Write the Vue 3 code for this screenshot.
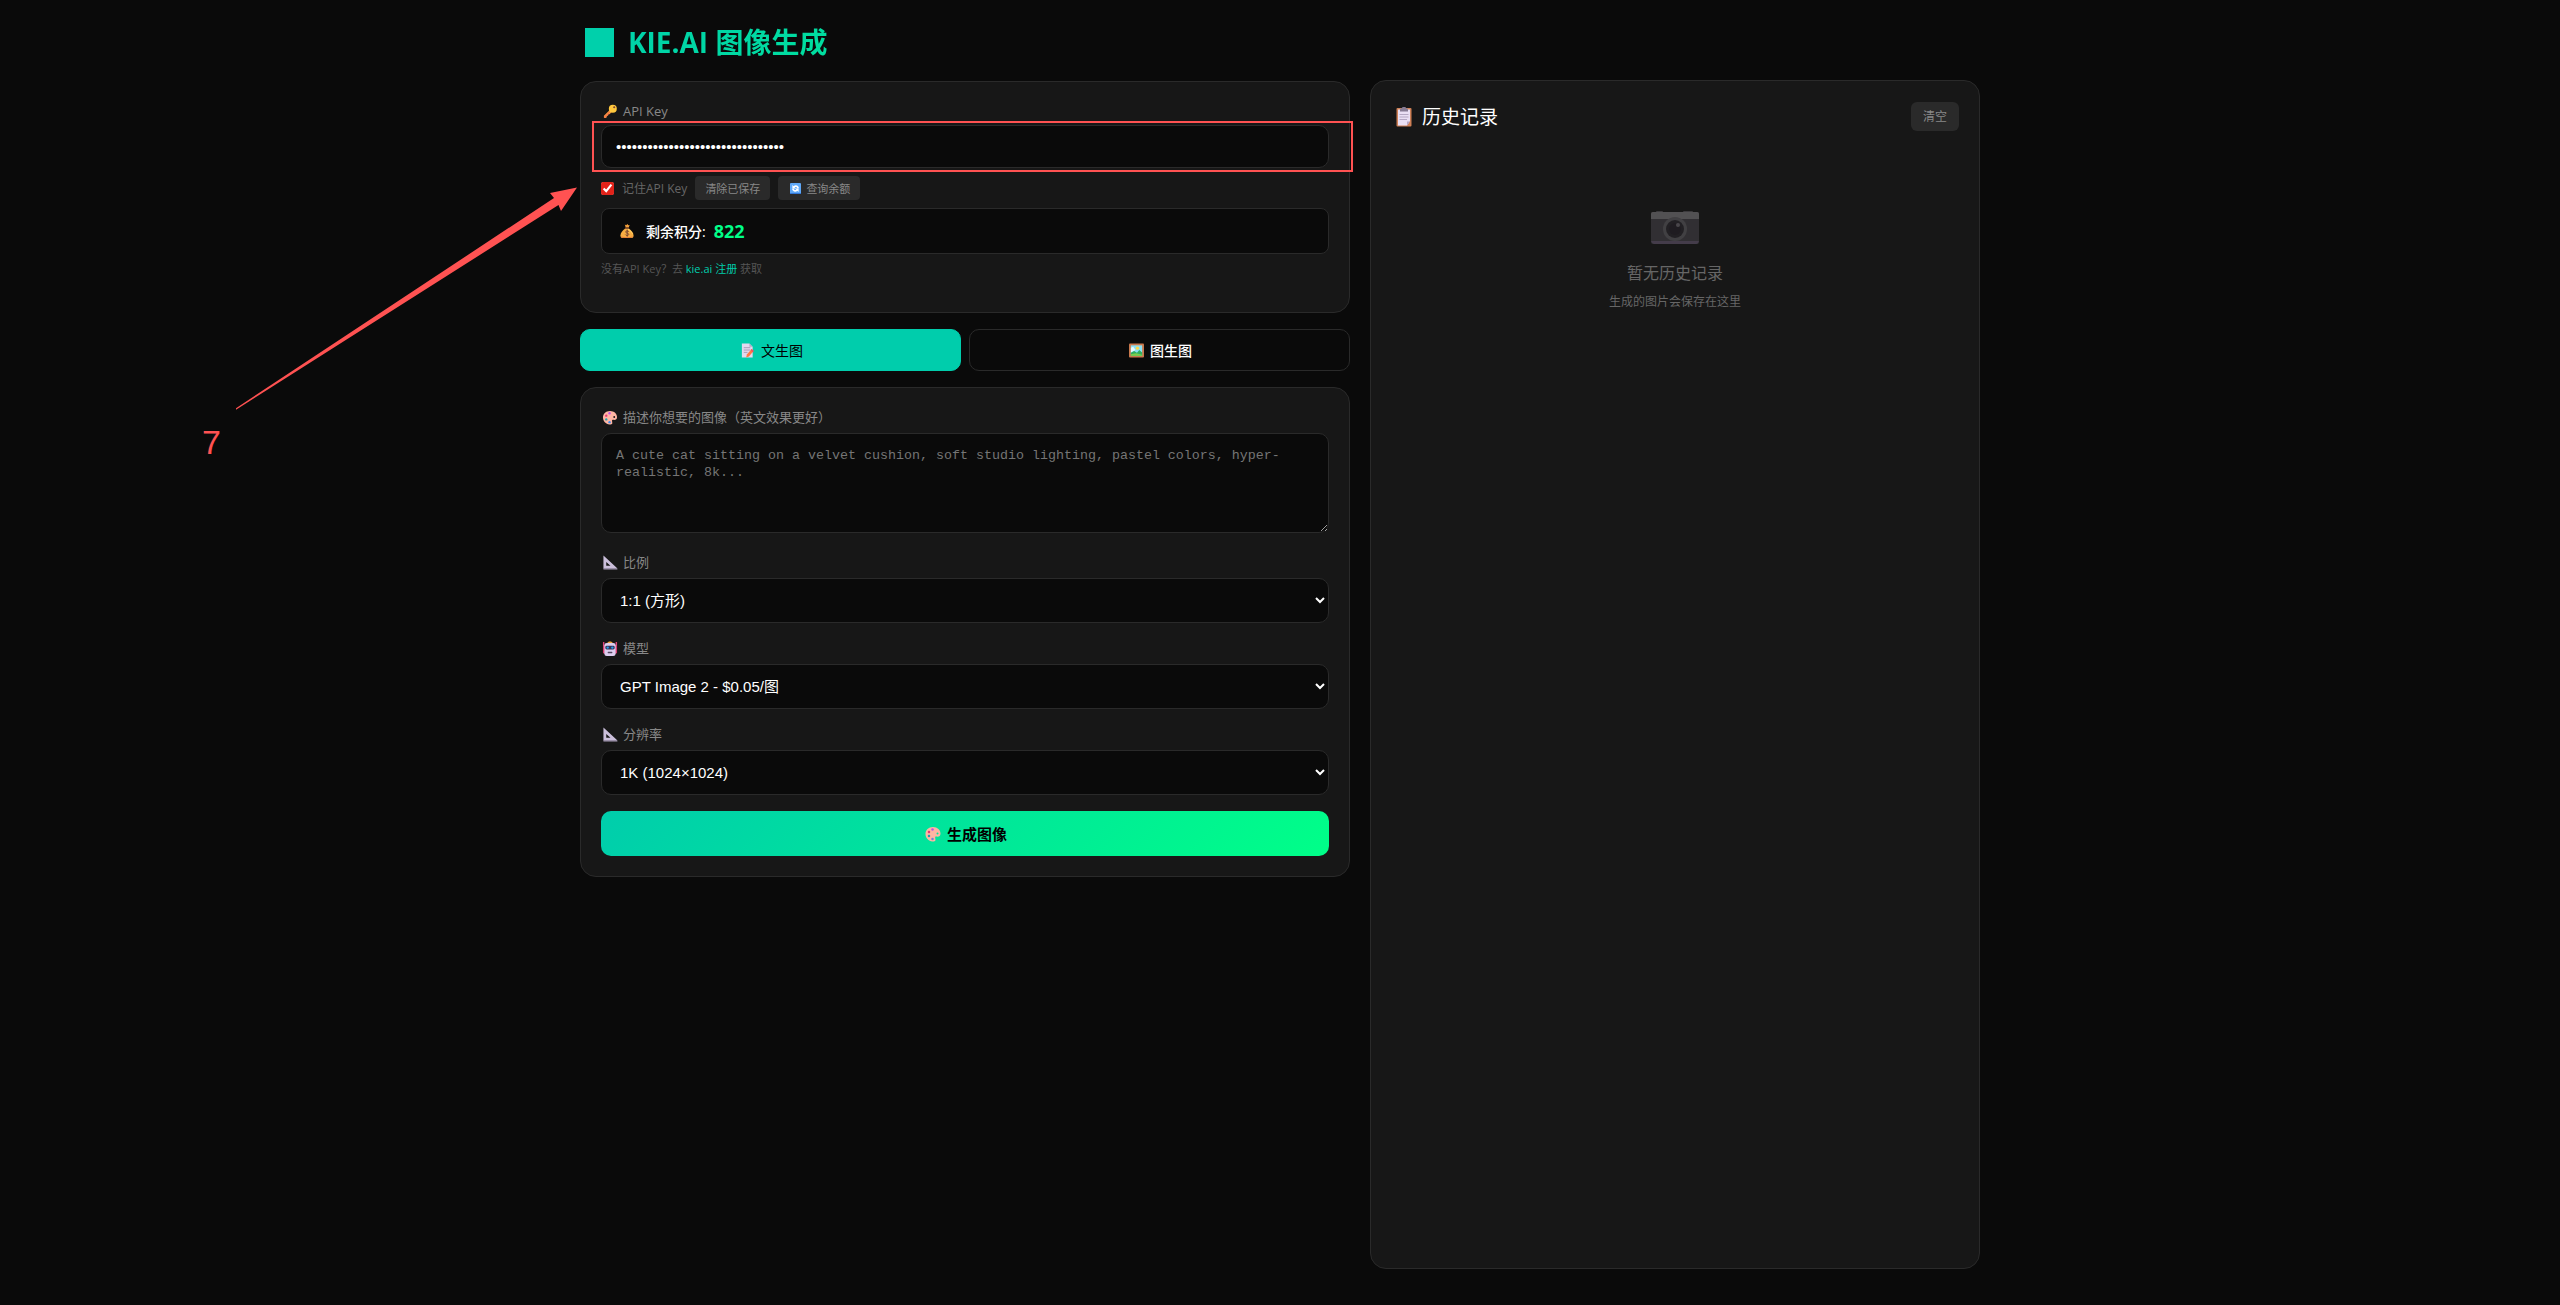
<template>
  <div class="page">
    <div class="container">
      <!-- 步骤标注 -->
      <svg class="arrow" viewBox="0 0 344 224" aria-hidden="true">
        <path d="M0 222.200 L318 12 L314 7 L341 1.500 L325 25 L322.500 19 L0 223.800 Z" fill="#ff5252" />
      </svg>
      <div class="step">7</div>

      <main class="main">
        <h1><span class="logo"></span>KIE.AI 图像生成</h1>

        <section class="card key-card">
          <label class="label label-key" for="apiKey">
            <svg class="icon" viewBox="0 0 32 32">
              <path d="M17 11 L3 25 L3 29 L7 30 L9 28 L9 25 L12 25 L12 22 L15 22 L21 16 Z" fill="#f79a3c" />
              <circle cx="22" cy="10" r="8.500" fill="#ffc83d" />
              <circle cx="25" cy="7" r="2.300" fill="#7d4533" />
              <path d="M3 29 L5 30 L17 18 L15 16 L3 27 Z" fill="#f9774a" />
            </svg>
            API Key
          </label>
          <div class="key-field">
            <input id="apiKey" v-model="apiKey" class="control" type="password" autocomplete="off" />
          </div>
          <div class="key-actions">
            <input id="remember" v-model="remember" type="checkbox" />
            <label for="remember">记住API Key</label>
            <button class="btn-small" type="button" @click="clearKey">清除已保存</button>
            <button class="btn-small" type="button">
              <svg class="icon-small" viewBox="0 0 32 32">
                <rect width="32" height="32" rx="3" fill="#5fa8f7" />
                <rect y="29" width="32" height="3" fill="#3277d8" />
                <path d="M7 6 V16 H17 L13.500 12.500 C17 10 20 12 21 15 H26 C25 7 16 4 10.500 9.500 Z M25 26 V16 H15 L18.500 19.500 C15 22 12 20 11 17 H6 C7 25 16 28 21.500 22.500 Z" fill="#fff" />
              </svg>
              查询余额
            </button>
          </div>
          <div class="balance">
            <svg class="icon-bag" viewBox="0 0 32 32">
              <path d="M11 1 L14 3 L17 0 L19 3 L22 2 L20 8 H13 Z" fill="#f5a13c" />
              <path d="M12 10 H20 C26 14 31 20 31 26 C31 30 29 32 25 32 H7 C3 32 1 30 1 26 C1 20 6 14 12 10 Z" fill="#f8ad43" />
              <path d="M18 10 C25 14 29 19 30 24 C27 22 25 17 18 13 Z" fill="#ffd567" />
              <path d="M3 28 C9 31 23 31 29 28 C28 32 25 32 25 32 H7 C5 32 3 30 3 28 Z" fill="#e17a38" />
              <rect x="11" y="8" width="10" height="3" rx="1" fill="#8b5131" />
              <path d="M20 18 C19 15 13 15 13 18 C13 22 20 20 20 24 C20 27 13 27 12 24 M16.500 13 V29" fill="none" stroke="#7c4932" stroke-width="2.200" />
            </svg>
            <span class="balance-label">剩余积分:</span>
            <strong>{{ credits }}</strong>
          </div>
          <p class="hint">没有API Key？去 <a href="#">kie.ai 注册</a> 获取</p>
        </section>

        <div class="tabs">
          <button type="button" :class="{ active: mode === 'text' }" @click="mode = 'text'">
            <svg class="icon-tab" viewBox="0 0 32 32">
              <path d="M4 1 H20 L27 8 V31 H4 Z" fill="#e3d8ef" />
              <path d="M20 1 V8 H27 Z" fill="#b6aac6" />
              <path d="M8 10 H22 M8 15 H22 M8 20 H16" stroke="#a79bb6" stroke-width="2" />
              <path d="M25 13 L29 17 L19 29 L13 31 L15 24 Z" fill="#ff7944" />
              <path d="M25 13 L29 17 L27 20 L23 15 Z" fill="#ef5068" />
            </svg>
            文生图
          </button>
          <button type="button" :class="{ active: mode === 'image' }" @click="mode = 'image'">
            <svg class="icon-tab" viewBox="0 0 32 32">
              <rect y="1" width="32" height="30" rx="2" fill="#c9794d" />
              <rect x="4" y="5" width="24" height="22" fill="#8be1f5" />
              <circle cx="18" cy="11" r="3.500" fill="#ffda4a" />
              <path d="M4 10 L9 8 L14 15 L4 20 Z" fill="#e6fbff" />
              <path d="M4 21 L11 17 L17 21 L22 15 L28 20 V27 H4 Z" fill="#2fae62" />
              <path d="M4 24 L15 22 L28 25 V27 H4 Z" fill="#7bcf4c" />
            </svg>
            图生图
          </button>
        </div>

        <section class="card">
          <label class="label" for="prompt">
            <svg class="icon" viewBox="0 0 32 32">
              <path :d="palettePath" fill="#ffb5a3" fill-rule="evenodd" />
              <circle cx="8" cy="12" r="2.500" fill="#e63974" />
              <circle cx="15" cy="7" r="2.500" fill="#bd52e8" />
              <circle cx="8" cy="20" r="2.500" fill="#22a3ad" />
              <circle cx="15" cy="26" r="2.500" fill="#3e8df0" />
            </svg>
            描述你想要的图像（英文效果更好）
          </label>
          <textarea
            id="prompt"
            v-model="prompt"
            placeholder="A cute cat sitting on a velvet cushion, soft studio lighting, pastel colors, hyper-realistic, 8k..."
          ></textarea>

          <div v-for="field in fields" :key="field.id" class="field">
            <label class="label" :for="field.id">
              <svg v-if="field.icon === 'ruler'" class="icon" viewBox="0 0 32 32">
                <path d="M2 1 L32 29 H2 Z M8 15 V23 H17 Z" fill="#cbbfdb" fill-rule="evenodd" />
                <path d="M2 28 H31 L32 31 H2 Z" fill="#aa9dba" />
              </svg>
              <svg v-else class="icon" viewBox="0 0 32 32">
                <path d="M1 2 H4 V12 H1 Z M28 2 H31 V12 H28 Z" fill="#e3447a" />
                <rect x="1" y="10" width="30" height="17" rx="3" fill="#d63d72" />
                <path d="M10 5 C11 0 21 0 22 5 Z" fill="#f2a63b" />
                <rect x="4" y="4" width="24" height="28" rx="5" fill="#dccdee" />
                <rect x="6" y="10" width="20" height="8" rx="3" fill="#343154" />
                <circle cx="11" cy="14" r="2.500" fill="#259de8" />
                <circle cx="21" cy="14" r="2.500" fill="#259de8" />
                <rect x="11" y="23" width="10" height="3" rx="1" fill="#51465f" />
              </svg>
              {{ field.label }}
            </label>
            <select :id="field.id" v-model="field.value" class="control">
              <option v-for="option in field.options" :key="option">{{ option }}</option>
            </select>
          </div>

          <button class="btn-generate" type="button">
            <svg class="icon-generate" viewBox="0 0 32 32">
              <path :d="palettePath" fill="#ffb5a3" fill-rule="evenodd" />
              <circle cx="8" cy="12" r="2.500" fill="#e63974" />
              <circle cx="15" cy="7" r="2.500" fill="#bd52e8" />
              <circle cx="8" cy="20" r="2.500" fill="#22a3ad" />
              <circle cx="15" cy="26" r="2.500" fill="#6f83d4" />
            </svg>
            生成图像
          </button>
        </section>
      </main>

      <aside class="card history">
        <div class="history-header">
          <h2>
            <svg class="icon-history" viewBox="0 0 32 40">
              <rect x="1" y="2" width="30" height="37" rx="2" fill="#cf8056" />
              <path d="M4 5 H28 V28 L22 37 H4 Z" fill="#e9dff4" />
              <path d="M22 37 V29 H28 Z" fill="#b6a7c8" />
              <path d="M12 2 C12 -1 20 -1 20 2 L24 4 V9 H8 V4 Z" fill="#867b93" />
              <path d="M7 15 H25 M7 20 H25 M7 25 H22" stroke="#b5a8c4" stroke-width="2" />
            </svg>
            历史记录
          </h2>
          <button class="btn-clear" type="button">清空</button>
        </div>
        <div class="empty">
          <svg class="camera" viewBox="0 0 48 34" aria-hidden="true">
            <rect x="5" y="0" width="7" height="4" rx="1" fill="#8b858f" />
            <rect x="32" y="0" width="10" height="4" rx="1" fill="#8b858f" />
            <rect y="1" width="48" height="32" rx="2" fill="#68636e" />
            <path d="M2 1 H46 Q48 1 48 3 V8 H0 V3 Q0 1 2 1 Z" fill="#d0ccd2" />
            <path d="M0 30 H48 L47 32 Q46 33 45 33 H3 Q1 33 0 30 Z" fill="#a28bb7" />
            <circle cx="24" cy="18" r="12" fill="#9b969f" />
            <circle cx="24" cy="18" r="9" fill="#3c3540" />
            <circle cx="24" cy="18" r="6" fill="#302936" />
            <ellipse cx="27" cy="14" rx="2" ry="2" fill="#b4abb9" />
          </svg>
          <p>暂无历史记录</p>
          <small>生成的图片会保存在这里</small>
        </div>
      </aside>
    </div>
  </div>
</template>

<script setup>
import { ref } from 'vue'

const apiKey = ref('0'.repeat(32))
const remember = ref(true)
const credits = ref(822)
const mode = ref('text')
const prompt = ref('')

const fields = ref([
  { id: 'ratio', icon: 'ruler', label: '比例', value: '1:1 (方形)', options: ['1:1 (方形)'] },
  { id: 'model', icon: 'robot', label: '模型', value: 'GPT Image 2 - $0.05/图', options: ['GPT Image 2 - $0.05/图'] },
  { id: 'resolution', icon: 'ruler', label: '分辨率', value: '1K (1024×1024)', options: ['1K (1024×1024)'] }
])

const palettePath = 'M16 2 C25 2 31 8 31 15 C31 21 27 22 22 21 C19 21 21 25 21 28 C21 30 18 31 15 31 C7 30 1 24 1 16 C1 8 7 2 16 2 Z M25 13 A2 2 0 1 0 25 17 A2 2 0 1 0 25 13 Z'

function clearKey() {
  apiKey.value = ''
  remember.value = false
}
</script>

<style>
body {
  margin: 0;
  background: #0a0a0a;
}
</style>

<style scoped>
* {
  box-sizing: border-box;
}
.page {
  min-height: 100vh;
  background: #0a0a0a;
  color: #fff;
  font-family: "Open Sans", "Noto Sans CJK SC", sans-serif;
  overflow-x: hidden;
}
.container {
  position: relative;
  max-width: 1400px;
  margin: 0 auto;
  display: grid;
  grid-template-columns: 77fr 61fr;
  gap: 20px;
  align-items: start;
}
h1,
h2,
p {
  margin: 0;
}
h1 {
  display: flex;
  align-items: center;
  gap: 14px;
  padding: 22px 0 19px 5px;
  font-size: 28px;
  line-height: 40px;
  font-weight: 700;
  background: linear-gradient(135deg, #00cdac, #00ff88);
  background-clip: text;
  -webkit-background-clip: text;
  color: transparent;
}
.logo {
  width: 29px;
  height: 29px;
  background: #00d0ab;
}
.card {
  background: #171717;
  border: 1px solid #2a2a2a;
  border-radius: 16px;
  padding: 20px;
}
.label {
  display: flex;
  align-items: center;
  gap: 4px;
  margin-bottom: 6px;
  font-size: 13px;
  line-height: 19px;
  color: #888;
}
.label-key {
  margin-bottom: 4px;
}
.icon {
  width: 18px;
  height: 15px;
}
.control {
  display: block;
  width: 100%;
  height: 45px;
  padding: 0 14px;
  border: 1px solid #2a2a2a;
  border-radius: 10px;
  background: #0a0a0a;
  color: #fff;
  font-family: "Liberation Sans", "Noto Sans CJK SC", sans-serif;
  font-size: 15px;
}
.key-field {
  position: relative;
}
.key-field .control {
  height: 43px;
}
.key-field::after {
  content: "";
  position: absolute;
  inset: -4px -24px -4px -9px;
  border: 2px solid #ff5252;
  pointer-events: none;
}
.key-actions {
  display: flex;
  align-items: center;
  gap: 8px;
  margin: 8px 0;
  font-size: 12px;
  color: #666;
}
.key-actions input {
  width: 13px;
  height: 13px;
  margin: 0;
  accent-color: #e2231a;
}
button {
  font-family: inherit;
  cursor: pointer;
}
.btn-small {
  display: flex;
  align-items: center;
  gap: 5px;
  height: 24px;
  padding: 0 10px;
  border: 0;
  border-radius: 4px;
  background: #2a2a2a;
  color: #888;
  font-size: 11px;
}
.icon-small {
  width: 11px;
  height: 11px;
  margin-left: 2px;
}
.balance {
  display: flex;
  align-items: center;
  height: 46px;
  padding: 0 18px;
  border: 1px solid #2a2a2a;
  border-radius: 8px;
  background: #0a0a0a;
}
.icon-bag {
  width: 14px;
  height: 16px;
}
.balance-label {
  margin: 0 8px 0 12px;
  font-size: 14px;
  font-weight: 500;
}
.balance strong {
  color: #00ff88;
  font-size: 18px;
}
.hint {
  margin: 7px 0 15px;
  font-size: 11px;
  line-height: 16px;
  color: #555;
}
.hint a {
  color: #00cdac;
  text-decoration: none;
}
.tabs {
  display: flex;
  gap: 8px;
  margin: 16px 0;
}
.tabs button {
  flex: 1;
  display: flex;
  align-items: center;
  justify-content: center;
  gap: 6px;
  height: 42px;
  border: 1px solid #2a2a2a;
  border-radius: 10px;
  background: #0a0a0a;
  color: #fff;
  font-size: 14px;
  font-weight: 500;
}
.tabs .active {
  background: #00cdac;
  border-color: #00cdac;
  color: #000;
  font-weight: 400;
}
.icon-tab {
  width: 15px;
  height: 15px;
  margin-left: 2px;
}
textarea {
  display: block;
  width: 100%;
  height: 100px;
  padding: 13px 14px;
  border: 1px solid #2a2a2a;
  border-radius: 10px;
  background: #0a0a0a;
  color: #fff;
  font-family: "Liberation Mono", monospace;
  line-height: 17px;
  resize: vertical;
}
textarea::placeholder {
  color: #757575;
}
.field {
  margin: 16px 0;
}
textarea + .field {
  margin-top: 20px;
}
.btn-generate {
  display: flex;
  align-items: center;
  justify-content: center;
  gap: 6px;
  width: 100%;
  height: 45px;
  border: 0;
  border-radius: 10px;
  background: linear-gradient(135deg, #00cdac, #00ff88);
  color: #000;
  font-size: 15px;
  font-weight: 700;
}
.icon-generate {
  width: 16px;
  height: 16px;
  margin-left: 2px;
}
.history {
  margin-top: 80px;
  min-height: calc(100vh - 116px);
}
.history-header {
  display: flex;
  align-items: center;
  justify-content: space-between;
}
h2 {
  display: flex;
  align-items: center;
  gap: 10px;
  padding: 2px 0 0 5px;
  font-size: 19px;
  line-height: 28px;
  font-weight: 400;
}
.icon-history {
  width: 16px;
  height: 20px;
}
.btn-clear {
  height: 29px;
  padding: 0 12px;
  border: 0;
  border-radius: 6px;
  background: #2a2a2a;
  color: #888;
  font-size: 12px;
}
.empty {
  display: flex;
  flex-direction: column;
  align-items: center;
  padding-top: 80px;
  color: #666;
}
.camera {
  width: 48px;
  height: 34px;
  margin-bottom: 16px;
  opacity: 0.32;
}
.empty p {
  font-size: 16px;
  line-height: 24px;
}
.empty small {
  margin-top: 8px;
  font-size: 12px;
  line-height: 18px;
}

/* 标注层 */
.arrow {
  position: absolute;
  top: 186px;
  left: -344px;
  width: 344px;
  height: 224px;
}
.step {
  position: absolute;
  top: 422px;
  left: -378px;
  color: #ff5252;
  font-family: "Liberation Sans", sans-serif;
  font-size: 34px;
  line-height: 40px;
}
</style>
